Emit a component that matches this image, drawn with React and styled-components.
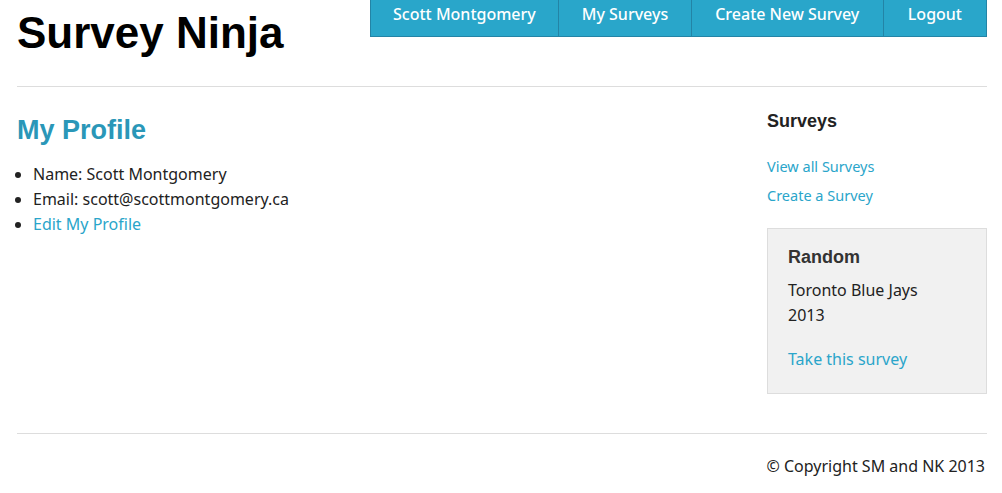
import React from "react";
import styled, { createGlobalStyle } from "styled-components";

const GlobalStyle = createGlobalStyle`
  html, body {
    margin: 0;
    padding: 0;
    background: #ffffff;
    color: #222222;
    font-family: "Noto Sans", "Open Sans", sans-serif;
    font-size: 16px;
  }
  a {
    color: #2aa5ca;
    text-decoration: none;
  }
`;

const Page = styled.div`
  width: 970px;
  margin: 0 17px;
`;

const Header = styled.header`
  display: flex;
  justify-content: space-between;
  align-items: flex-start;
  height: 86px;
  border-bottom: 1px solid #dddddd;
`;

const Logo = styled.h1`
  margin: 6px 0 0;
  font-family: "Liberation Sans", Arial, sans-serif;
  font-size: 44px;
  font-weight: bold;
  color: #000000;
  line-height: 54px;
`;

const Nav = styled.nav`
  display: flex;
  background: #29a6ca;
  border: 1px solid #2384a6;
  border-top: none;
`;

const NavItem = styled.a`
  display: block;
  padding: 0 ${(p) => p.$pad || 24}px;
  height: 36px;
  line-height: 28px;
  color: #ffffff;
  font-size: 16px;
  font-weight: 500;
  border-left: 1px solid ${(p) => (p.$first ? "transparent" : "#2384a6")};
  margin-left: ${(p) => (p.$first ? "-1px" : "0")};
`;

const Body = styled.div`
  display: flex;
  justify-content: space-between;
  min-height: 346px;
  border-bottom: 1px solid #dddddd;
`;

const Main = styled.main`
  flex: 1;
`;

const Title = styled.h2`
  margin: 26px 0 0;
  font-family: "Liberation Sans", Arial, sans-serif;
  font-size: 27px;
  font-weight: bold;
  color: #2a97b8;
  line-height: 34px;
`;

const List = styled.ul`
  margin: 15px 0 0;
  padding-left: 16px;
  li {
    line-height: 25px;
  }
`;

const Sidebar = styled.aside`
  width: 220px;
`;

const SideTitle = styled.h3`
  margin: 22px 0 0;
  font-family: "Liberation Sans", Arial, sans-serif;
  font-size: 18px;
  font-weight: bold;
  color: #222222;
  line-height: 24px;
`;

const SideLinks = styled.div`
  display: flex;
  flex-direction: column;
  gap: 8px;
  margin-top: 23px;
  font-size: 14.5px;
  line-height: 21px;
`;

const RandomBox = styled.div`
  margin-top: 22px;
  padding: 15px 20px 21px;
  background: #f1f1f1;
  border: 1px solid #dddddd;
`;

const BoxTitle = styled.h4`
  margin: 0;
  font-family: "Liberation Sans", Arial, sans-serif;
  font-size: 18px;
  font-weight: bold;
  color: #333333;
  line-height: 26px;
`;

const BoxText = styled.p`
  margin: 8px 0 0;
  line-height: 25px;
`;

const BoxLink = styled.a`
  display: block;
  margin-top: 19px;
  line-height: 25px;
`;

const Footer = styled.footer`
  text-align: right;
  padding: 22px 2px 0 0;
  line-height: 20px;
`;

export default function App() {
  return (
    <>
      <GlobalStyle />
      <Page>
        <Header>
          <Logo>Survey Ninja</Logo>
          <Nav>
            <NavItem $first $pad={22.5} href="#">Scott Montgomery</NavItem>
            <NavItem $pad={22.5} href="#">My Surveys</NavItem>
            <NavItem $pad={23.5} href="#">Create New Survey</NavItem>
            <NavItem $pad={24} href="#">Logout</NavItem>
          </Nav>
        </Header>
        <Body>
          <Main>
            <Title>My Profile</Title>
            <List>
              <li>Name: Scott Montgomery</li>
              <li>Email: scott@scottmontgomery.ca</li>
              <li><a href="#">Edit My Profile</a></li>
            </List>
          </Main>
          <Sidebar>
            <SideTitle>Surveys</SideTitle>
            <SideLinks>
              <a href="#">View all Surveys</a>
              <a href="#">Create a Survey</a>
            </SideLinks>
            <RandomBox>
              <BoxTitle>Random</BoxTitle>
              <BoxText>Toronto Blue Jays<br />2013</BoxText>
              <BoxLink href="#">Take this survey</BoxLink>
            </RandomBox>
          </Sidebar>
        </Body>
        <Footer>© Copyright SM and NK 2013</Footer>
      </Page>
    </>
  );
}
